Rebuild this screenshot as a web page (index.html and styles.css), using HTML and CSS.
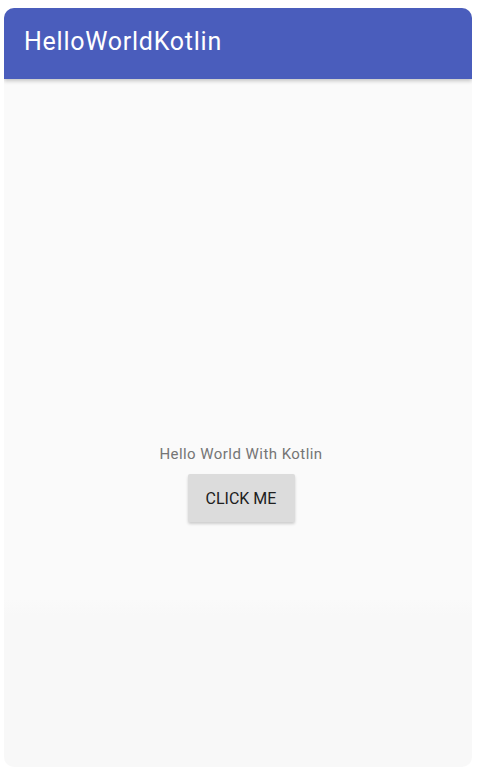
FILE: index.html
```html
<!DOCTYPE html>
<html>
<head>
<meta charset="utf-8">
<link rel="stylesheet" href="styles.css">
</head>
<body>
<div class="phone">
  <header class="appbar"><span class="title">HelloWorldKotlin</span></header>
  <main class="content">
    <p class="hello">Hello World With Kotlin</p>
    <button class="btn">CLICK ME</button>
  </main>
</div>
</body>
</html>
```
FILE: styles.css
```css
html, body {
  margin: 0;
  padding: 0;
  background: #ffffff;
}
body {
  padding: 8px 0 0 4px;
  font-family: Roboto, "Noto Sans", sans-serif;
}
.phone {
  width: 468px;
  height: 759px;
  border-radius: 10px;
  overflow: hidden;
  background: linear-gradient(to bottom, #fafafa 0%, #fafafa 78%, #f8f8f8 80%, #f8f8f8 100%);
  display: flex;
  flex-direction: column;
}
.appbar {
  height: 71px;
  flex: none;
  background: #4a5dbc;
  display: flex;
  align-items: center;
  padding-left: 20px;
  box-shadow: 0 2px 4px rgba(0,0,0,0.22);
  position: relative;
  z-index: 1;
}
.title {
  color: #ffffff;
  font-size: 25px;
  font-weight: 400;
  letter-spacing: 0.75px;
  margin-top: -4px;
}
.content {
  flex: 1;
  display: flex;
  flex-direction: column;
  align-items: center;
  padding-top: 365px;
}
.hello {
  margin: 0 0 0 6px;
  font-size: 15px;
  line-height: 20px;
  letter-spacing: 0.45px;
  color: #757575;
}
.btn {
  margin-top: 10px;
  margin-left: 6px;
  width: 107px;
  height: 48px;
  border: none;
  border-radius: 2px;
  background: #dcdcdc;
  color: #202020;
  font-family: Roboto, "Noto Sans", sans-serif;
  font-size: 16px;
  font-weight: 400;
  box-shadow: 0 2px 3px rgba(0,0,0,0.18);
  padding: 0;
}
```
